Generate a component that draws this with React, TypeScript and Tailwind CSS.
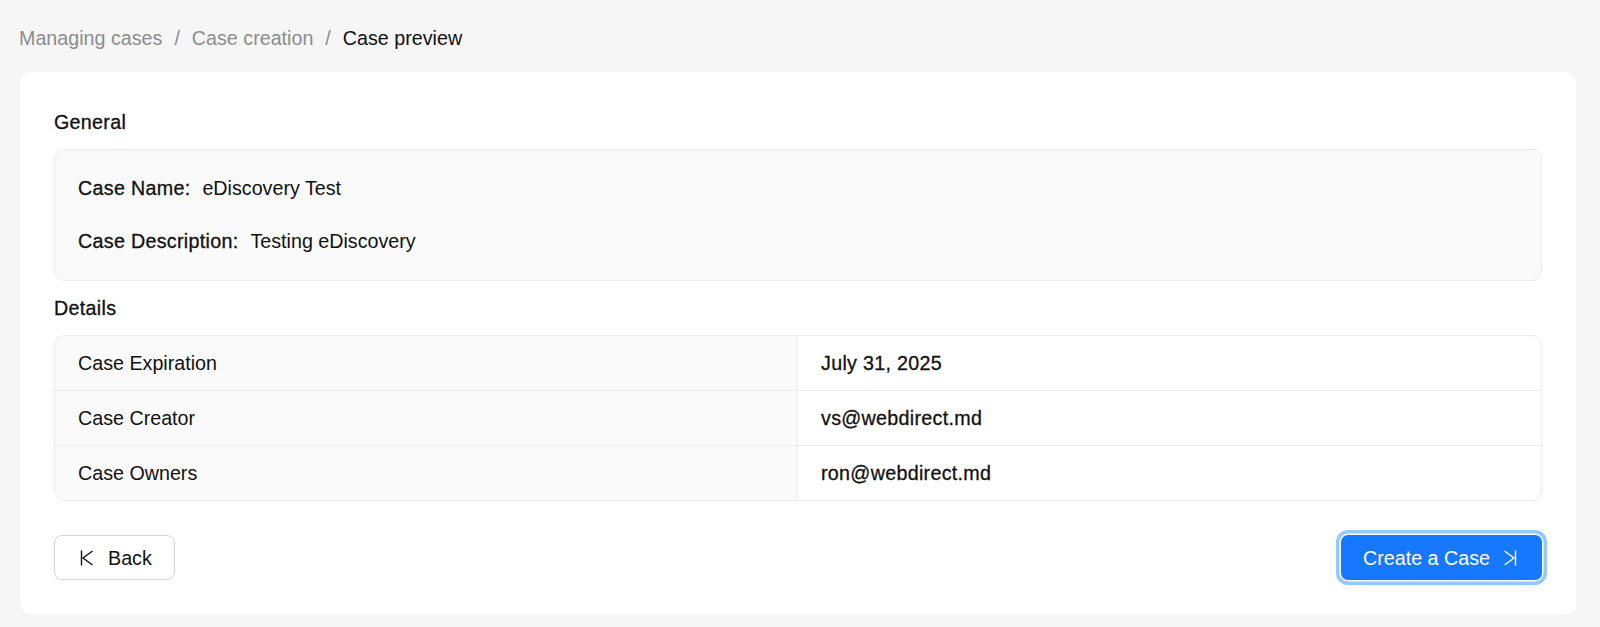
const medium = 'font-normal tracking-[0.3px] [-webkit-text-stroke:0.3px_#111]';

function BackIcon() {
  return (
    <svg width="14" height="16" viewBox="0 0 14 16" fill="none" stroke="currentColor" strokeWidth="1.4">
      <path d="M1.5 0.5V15.5" />
      <path d="M12.5 1L3 8L12.5 15" />
    </svg>
  );
}

function NextIcon() {
  return (
    <svg width="14" height="16" viewBox="0 0 14 16" fill="none" stroke="currentColor" strokeWidth="1.4">
      <path d="M12.5 0.5V15.5" />
      <path d="M1.5 1L11 8L1.5 15" />
    </svg>
  );
}

function DetailRow({ label, value, last }: { label: string; value: string; last?: boolean }) {
  return (
    <div className={`flex ${last ? 'h-[54px]' : 'h-[55px] border-b border-[#ececec]'}`}>
      <div className="flex w-[743px] items-center border-r border-[#ececec] bg-[#fafafa] pl-[23px]">{label}</div>
      <div className={`flex flex-1 items-center pl-[23px] ${medium}`}>{value}</div>
    </div>
  );
}

export default function App() {
  return (
    <div className="h-[627px] bg-[#f6f6f6] pl-[20px] pr-[24px] pt-[26px] font-['Liberation_Sans',Arial,sans-serif] text-[19.7px] leading-[24px] text-[#111]">
      {/* Breadcrumb */}
      <div className="-ml-[1px] flex h-[24px] items-center text-[#8c8c8c]">
        <span>Managing cases</span>
        <span className="mx-[12px]">/</span>
        <span>Case creation</span>
        <span className="mx-[12px]">/</span>
        <span className="text-[#111]">Case preview</span>
      </div>

      <div className="mt-[22px] h-[542px] rounded-[10px] bg-white px-[34px] pt-[38px]">
        <h2 className={`h-[24px] ${medium}`}>General</h2>
        <div className="mt-[15px] flex h-[132px] flex-col justify-center gap-[29px] rounded-[10px] border border-[#ececec] bg-[#fafafa] pb-[2px] pl-[23px]">
          <p>
            <span className={`mr-[12px] ${medium}`}>Case Name:</span>eDiscovery Test
          </p>
          <p>
            <span className={`mr-[12px] ${medium}`}>Case Description:</span>Testing eDiscovery
          </p>
        </div>

        <h2 className={`mt-[15px] h-[24px] ${medium}`}>Details</h2>
        <div className="mt-[15px] overflow-hidden rounded-[10px] border border-[#ececec]">
          <DetailRow label="Case Expiration" value="July 31, 2025" />
          <DetailRow label="Case Creator" value="vs@webdirect.md" />
          <DetailRow label="Case Owners" value="ron@webdirect.md" last />
        </div>

        <div className="mt-[34px] flex items-center justify-between">
          <button className="flex h-[45px] w-[121px] items-center gap-[14px] rounded-[8px] border border-[#d4d4d4] bg-white pl-[25px]">
            <BackIcon />
            Back
          </button>
          <button className="flex h-[45px] w-[201px] items-center gap-[13px] rounded-[7px] bg-[#1677ff] pl-[22px] text-white shadow-[0_0_0_1.5px_#ffffff,0_0_0_5px_#91caff]">
            Create a Case
            <NextIcon />
          </button>
        </div>
      </div>
    </div>
  );
}
